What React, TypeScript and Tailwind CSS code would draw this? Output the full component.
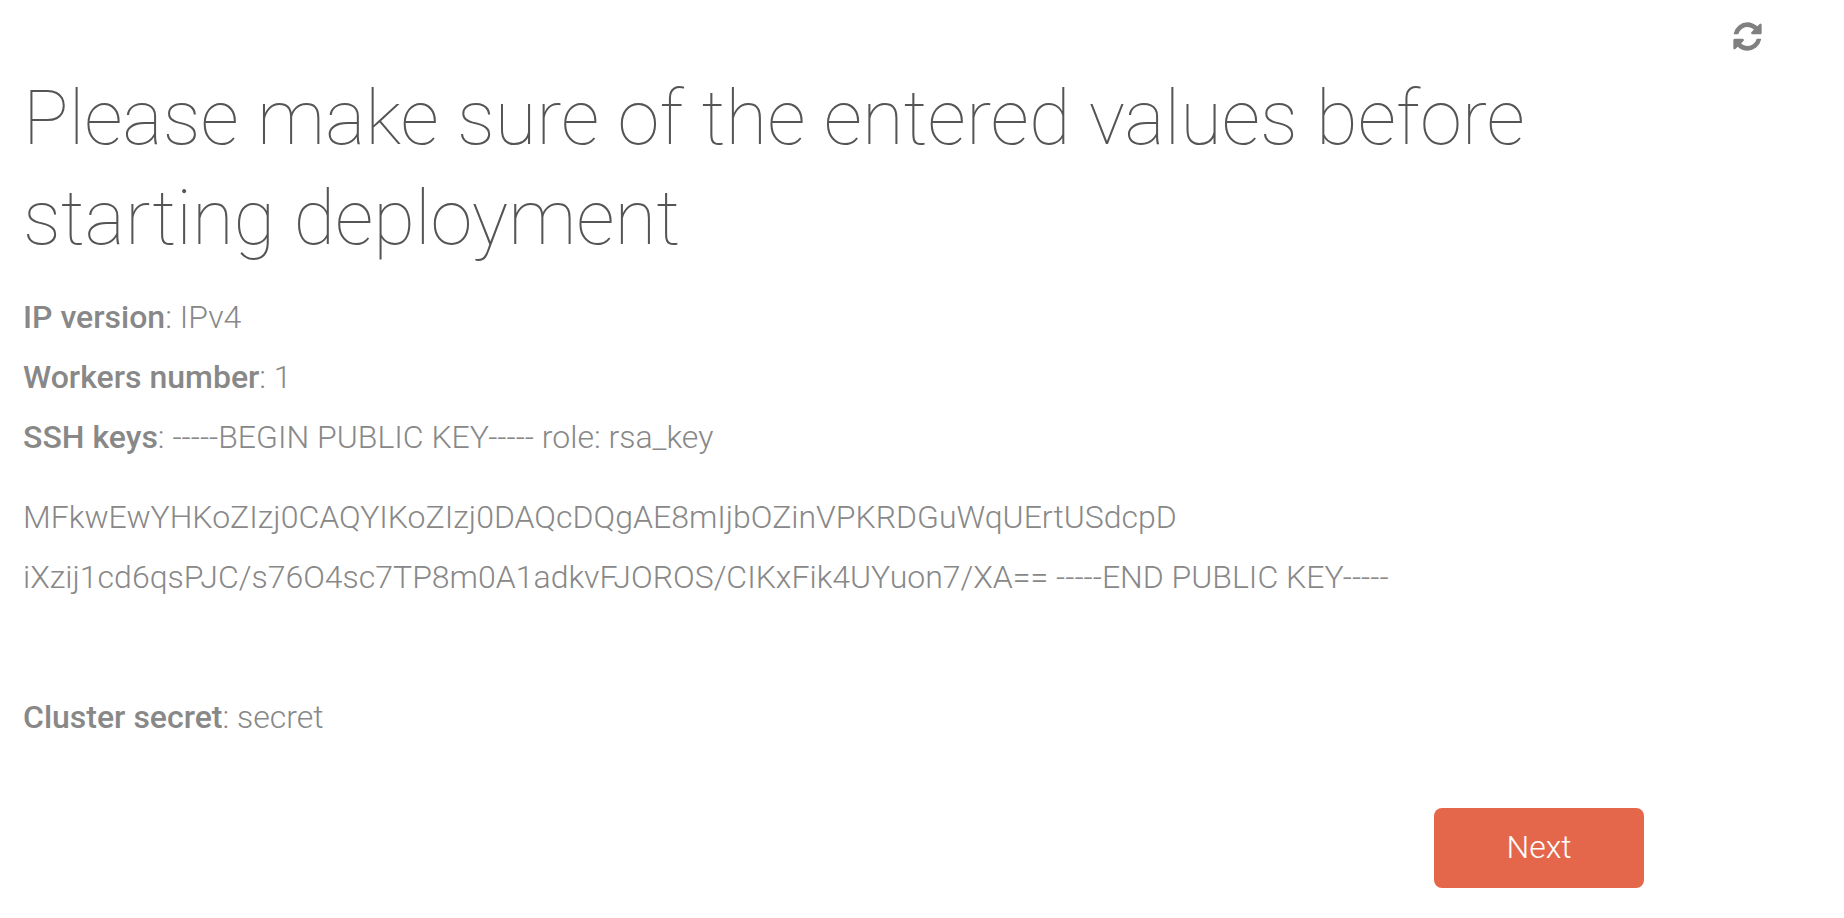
import React from "react";

const Field = ({ label, value }: { label: string; value: string }) => (
  <p className="m-0">
    <strong className="font-medium">{label}</strong>: {value}
  </p>
);

// font-awesome 4 "refresh" glyph
const RefreshIcon = () => (
  <svg viewBox="0 0 1792 1792" className="h-[33px] w-[33px] fill-[#808080]">
    <path d="M1639 1056q0 5-1 7-64 268-268 434.500t-478 166.500q-146 0-282.500-55t-243.500-157l-129 129q-19 19-45 19t-45-19-19-45v-448q0-26 19-45t45-19h448q26 0 45 19t19 45-19 45l-137 137q71 66 161 102t187 36q134 0 250-65t186-179q11-17 53-117 8-23 30-23h192q13 0 22.500 9.500t9.500 22.500zm25-800v448q0 26-19 45t-45 19h-448q-26 0-45-19t-19-45 19-45l138-138q-148-137-349-137-134 0-250 65t-186 179q-11 17-53 117-8 23-30 23h-199q-13 0-22.500-9.500t-9.500-22.500v-7q65-268 270-434.500t480-166.500q146 0 284 55.500t245 156.500l130-129q19-19 45-19t45 19 19 45z" />
  </svg>
);

export default function App() {
  return (
    <div className="h-[918px] overflow-hidden bg-white font-['Roboto',sans-serif] font-light text-[#888888]">
      <div className="flex justify-end pt-5 pr-20">
        <RefreshIcon />
      </div>
      <div className="pl-[23px]">
        <h1 className="mt-[15px] max-w-[1560px] text-[76px] leading-[100px] font-thin text-[#555555]">
          Please make sure of the entered values before starting deployment
        </h1>
        <div className="mt-[19px] text-[32px] leading-[60px]">
          <Field label="IP version" value="IPv4" />
          <Field label="Workers number" value="1" />
          <Field label="SSH keys" value="-----BEGIN PUBLIC KEY----- role: rsa_key" />
          <p className="mt-5">MFkwEwYHKoZIzj0CAQYIKoZIzj0DAQcDQgAE8mIjbOZinVPKRDGuWqUErtUSdcpD</p>
          <p>iXzij1cd6qsPJC/s76O4sc7TP8m0A1adkvFJOROS/CIKxFik4UYuon7/XA== -----END PUBLIC KEY-----</p>
          <div className="mt-20">
            <Field label="Cluster secret" value="secret" />
          </div>
        </div>
        <div className="mt-[61px] flex justify-end pr-[200px]">
          <button className="h-20 w-[210px] rounded-lg bg-[#e4674b] pb-0.5 text-[32px] font-light text-white">
            Next
          </button>
        </div>
      </div>
    </div>
  );
}
